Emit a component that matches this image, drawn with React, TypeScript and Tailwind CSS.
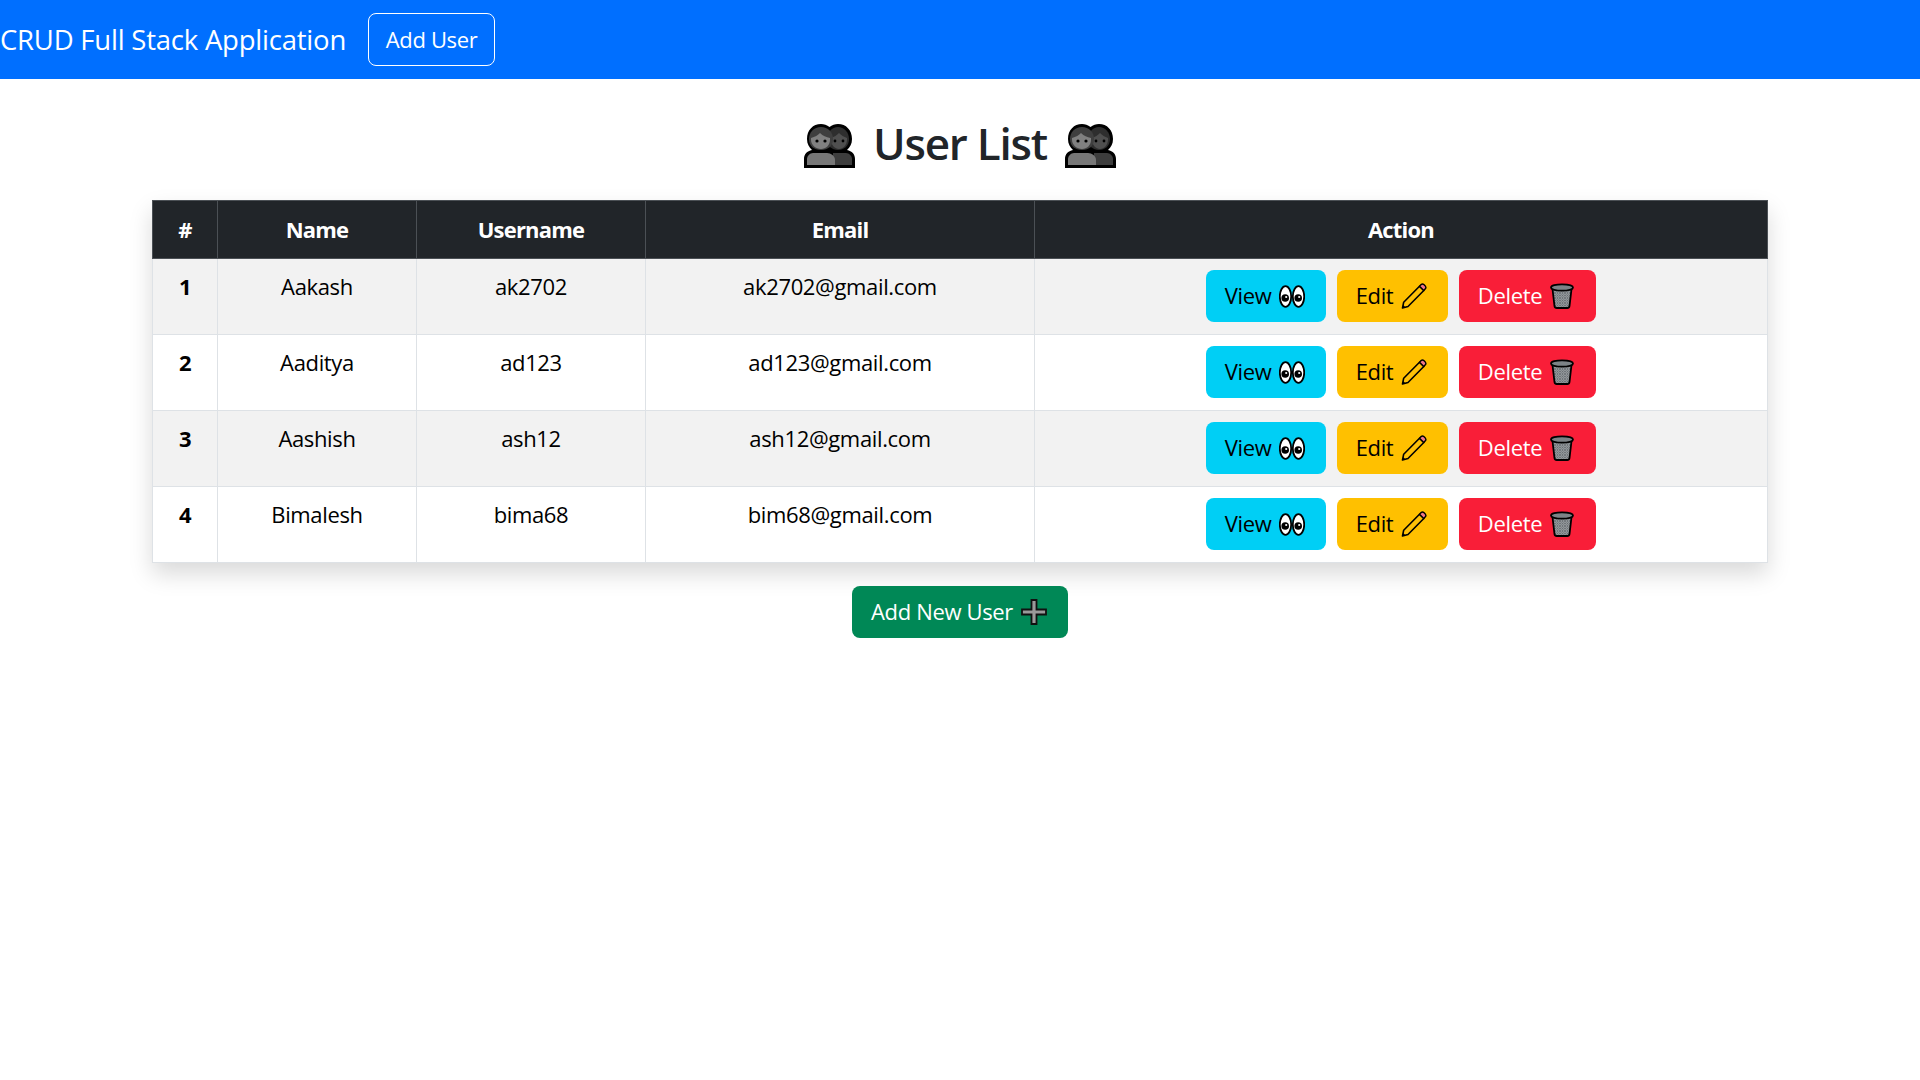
const users = [
  { id: 1, name: "Aakash", username: "ak2702", email: "ak2702@gmail.com" },
  { id: 2, name: "Aaditya", username: "ad123", email: "ad123@gmail.com" },
  { id: 3, name: "Aashish", username: "ash12", email: "ash12@gmail.com" },
  { id: 4, name: "Bimalesh", username: "bima68", email: "bim68@gmail.com" },
];

function PeopleIcon() {
  return (
    <svg width="51" height="45" viewBox="0 0 51 45">
      {/* black silhouette first, the fills sit inside it */}
      <path d="M0 45V36c0-5 3-8 8-9-3-3-5-6-5-11C3 7 9 1 17 1c3 0 6 1 8.500 3C28 2 31 1 34 1c8 0 14 6 14 15 0 5-2 8-5 11 5 1 8 4 8 9v9z" fill="#000" />
      <path d="M29 42V30h13c3 0 6 3 6 6v6z" fill="#3d3d3d" />
      <path d="M3 42v-6c0-3 3-6 6-6h14c4 0 8 3 8 7v5z" fill="#777" />
      <path d="M34 4c6 0 11 5 11 12s-5 11-11 11-11-4-11-11S28 4 34 4z" fill="#2e2e2e" />
      <path d="M27 15c3-1 6-3 8-5 2 2 5 4 8 5v2c0 5-4 9-8 9s-8-4-8-9z" fill="#4f4f4f" />
      <path d="M17 4c7 0 12 5 12 12s-5 11-12 11S5 23 5 16 10 4 17 4z" fill="#3f3f3f" />
      <path d="M7 15c4-1 7-3 9-5 3 3 6 4 10 5v2c0 5-4 9-9 9s-10-4-10-9z" fill="#808080" />
      <circle cx="13" cy="18" r="1.600" fill="#000" />
      <circle cx="21" cy="18" r="1.600" fill="#000" />
      <circle cx="31" cy="18" r="1.400" fill="#000" />
      <circle cx="39" cy="18" r="1.400" fill="#000" />
    </svg>
  );
}

function EyesIcon() {
  return (
    <svg width="26" height="23" viewBox="0 0 26 23">
      <ellipse cx="6.500" cy="11.500" rx="5.700" ry="10.300" fill="#fff" stroke="#000" strokeWidth="1.800" />
      <ellipse cx="19.500" cy="11.500" rx="5.700" ry="10.300" fill="#fff" stroke="#000" strokeWidth="1.800" />
      <circle cx="6.200" cy="13" r="3.800" fill="#000" />
      <circle cx="19.200" cy="13" r="3.800" fill="#000" />
      <circle cx="7.200" cy="12" r="1.100" fill="#fff" />
      <circle cx="20.200" cy="12" r="1.100" fill="#fff" />
    </svg>
  );
}

function PencilIcon() {
  return (
    <svg width="26" height="26" viewBox="0 0 26 26">
      <path d="M7 23.500L1.500 25l1.200-5.800L18.500 3.200 22.800 7.500z" fill="#ffc107" stroke="#000" strokeWidth="1.600" strokeLinejoin="round" />
      <path d="M18.500 3.200l1.600-1.600c.8-.7 2-.7 2.700 0l1.500 1.500c.7.8.7 1.900 0 2.700L22.800 7.500z" fill="#f2788a" stroke="#000" strokeWidth="1.400" strokeLinejoin="round" />
      <path d="M1.500 25l.6-3 2.300 2.300z" fill="#000" />
    </svg>
  );
}

function TrashIcon() {
  return (
    <svg width="24" height="26" viewBox="0 0 24 26">
      <defs>
        <pattern id="mesh" width="2.500" height="2.500" patternUnits="userSpaceOnUse">
          <rect width="2.500" height="2.500" fill="#a3a8ac" />
          <path d="M0 0l2.500 2.500M2.500 0L0 2.500" stroke="#5f6468" strokeWidth="0.700" />
        </pattern>
      </defs>
      <path d="M2.500 6l2 17c.2 1.200 1 2 2.200 2h10.600c1.200 0 2-.8 2.200-2l2-17z" fill="url(#mesh)" stroke="#000" strokeWidth="1.800" />
      <ellipse cx="12" cy="4.500" rx="11" ry="3.200" fill="#7d8387" stroke="#000" strokeWidth="1.800" />
    </svg>
  );
}

function PlusIcon() {
  return (
    <svg width="26" height="26" viewBox="0 0 26 26">
      <path d="M10.500 1h5v9.500H25v5h-9.500V25h-5v-9.500H1v-5h9.500z" fill="#9a9a9a" stroke="#111" strokeWidth="1.800" />
    </svg>
  );
}

export default function App() {
  return (
    <div className="min-h-[1080px] bg-white text-[22px] leading-[33px] tracking-[-0.35px] text-black font-['Open_Sans',sans-serif]">
      <nav className="flex h-[79px] items-center bg-[#006fff]">
        <span className="mr-[22px] text-[27.5px] tracking-[-0.22px] text-white">CRUD Full Stack Application</span>
        <button className="flex h-[53px] w-[127px] items-center justify-center rounded-[8px] border border-white text-white">
          Add User
        </button>
      </nav>

      <h2 className="mt-[33px] flex h-[66px] items-center justify-center gap-[18px] text-[44px] font-semibold tracking-[-1.2px] text-[#212529]">
        <PeopleIcon />
        <span className="pb-[4px]">User List</span>
        <PeopleIcon />
      </h2>

      <div className="mx-auto mt-[22px] w-[1616px] shadow-[0_11px_22px_rgba(0,0,0,0.15)]">
        <table className="w-full table-fixed border-collapse text-center">
          <colgroup>
            <col className="w-[65px]" />
            <col className="w-[199px]" />
            <col className="w-[229px]" />
            <col className="w-[389px]" />
            <col />
          </colgroup>
          <thead>
            <tr className="h-[58px] bg-[#212529] tracking-[-0.8px] text-white">
              <th className="border border-[#4b5055]">#</th>
              <th className="border border-[#4b5055]">Name</th>
              <th className="border border-[#4b5055]">Username</th>
              <th className="border border-[#4b5055]">Email</th>
              <th className="border border-[#4b5055]">Action</th>
            </tr>
          </thead>
          <tbody>
            {users.map((user) => (
              <tr key={user.id} className={user.id % 2 === 1 ? "h-[76px] bg-[#f2f2f2]" : "h-[76px] bg-white"}>
                <th className="border border-[#dee2e6] pt-[11px] align-top">{user.id}</th>
                <td className="border border-[#dee2e6] pt-[11px] align-top">{user.name}</td>
                <td className="border border-[#dee2e6] pt-[11px] align-top">{user.username}</td>
                <td className="border border-[#dee2e6] pt-[11px] align-top">{user.email}</td>
                <td className="border border-[#dee2e6] pt-[11px] align-top">
                  <div className="flex justify-center gap-[11px]">
                    <button className="flex h-[52px] w-[120px] items-center justify-center gap-[8px] rounded-[8px] bg-[#00cff5] pr-[2px] pb-[1px] text-black">
                      View
                      <span className="mt-[2px]"><EyesIcon /></span>
                    </button>
                    <button className="flex h-[52px] w-[111px] items-center justify-center gap-[8px] rounded-[8px] bg-[#ffc000] pr-[2px] pb-[1px] text-black">
                      Edit
                      <PencilIcon />
                    </button>
                    <button className="flex h-[52px] w-[137px] items-center justify-center gap-[8px] rounded-[8px] bg-[#f91e38] pr-[3px] pb-[1px] text-white">
                      Delete
                      <TrashIcon />
                    </button>
                  </div>
                </td>
              </tr>
            ))}
          </tbody>
        </table>
      </div>

      <div className="mt-[23px] flex justify-center">
        <button className="flex h-[52px] w-[216px] items-center justify-center gap-[8px] rounded-[8px] bg-[#008856] pr-[2px] pb-[1px] text-white">
          Add New User
          <PlusIcon />
        </button>
      </div>
    </div>
  );
}
